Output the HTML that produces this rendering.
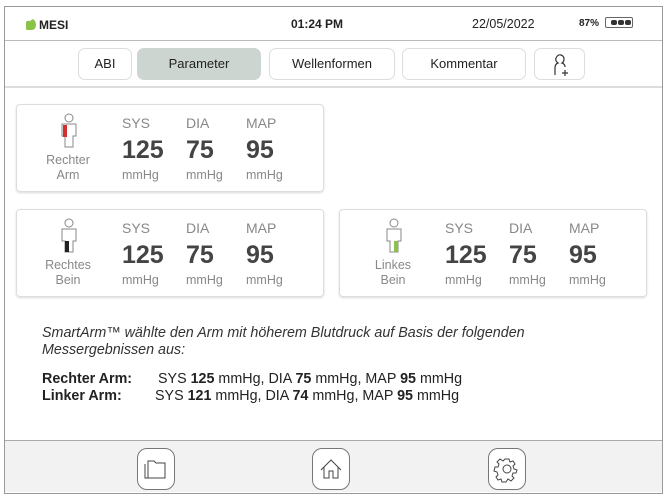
<!DOCTYPE html>
<html><head><meta charset="utf-8"><style>
*{box-sizing:border-box;margin:0;padding:0}
body{width:666px;height:497px;background:#fff;font-family:"Liberation Sans",sans-serif;position:relative;overflow:hidden;color:#333}
.frame{position:absolute;left:4px;top:6px;width:659px;height:488px;border:1px solid #999;}
.abs{position:absolute}
.hdr{position:absolute;left:0;top:0;width:657px;height:34px;border-bottom:1px solid #bbb;font-size:12px;font-weight:bold;color:#222}
.tabs{position:absolute;left:0;top:34px;width:657px;height:47px;border-bottom:2px solid #ddd}
.tab{position:absolute;top:7px;height:32px;border:1px solid #ddd;border-radius:7px;font-size:13px;text-align:center;line-height:30px;color:#222;background:#fff}
.card{position:absolute;width:308px;height:88px;border:1px solid #ddd;border-radius:4px;box-shadow:0 1px 2px rgba(0,0,0,.15)}
.lbl{position:absolute;color:#888;font-size:12.5px;text-align:center;line-height:15px}
.col{position:absolute;top:10px;color:#888;font-size:14px}
.col b{display:block;font-size:25px;color:#444;margin:7px 0 4px;line-height:24px}
.col i{font-style:normal;font-size:12.5px}
.foot{position:absolute;left:0;top:434px;width:657px;height:52px;background:#f2f2f2;border-top:1px solid #aaa}
.fb{position:absolute;top:7px;width:38px;height:42px;border:1px solid #777;border-radius:10px;background:#fff}
.t{font-size:14.3px;line-height:17px;color:#222}
</style></head><body>
<div class="frame">
 <div class="hdr">
  <svg class="abs" style="left:20px;top:12px" width="12" height="11"><path d="M1 4 Q1 1 5 2 L8 0 Q11 2 11 6 Q11 11 6 11 L2 11 Q1 11 1 9Z" fill="#8bc34a"/></svg>
  <span class="abs" style="left:34px;top:11px">MESI</span>
  <span class="abs" style="left:286px;top:10px">01:24 PM</span>
  <span class="abs" style="left:467px;top:10px;font-weight:normal;font-size:12.5px">22/05/2022</span>
  <span class="abs" style="left:574px;top:11px;font-size:10px">87%</span>
  <div class="abs" style="left:600px;top:10px;width:28px;height:11px;border:1px solid #666;border-radius:2px;background:#fff"></div>
  <div class="abs" style="left:606px;top:13px;width:6px;height:5px;background:#333;border-radius:2px"></div>
  <div class="abs" style="left:613px;top:13px;width:6px;height:5px;background:#333;border-radius:2px"></div>
  <div class="abs" style="left:620px;top:13px;width:6px;height:5px;background:#333;border-radius:2px"></div>
 </div>
 <div class="tabs">
  <div class="tab" style="left:73px;width:54px">ABI</div>
  <div class="tab" style="left:132px;width:124px;background:#ccd5d0;border-color:#ccd5d0">Parameter</div>
  <div class="tab" style="left:264px;width:126px">Wellenformen</div>
  <div class="tab" style="left:397px;width:124px">Kommentar</div>
  <div class="tab" style="left:529px;width:51px"><svg width="24" height="24" style="margin-top:4px"><path d="M7 22 V15 Q7 11 10 10 Q7 8 8 5 Q10 1 13 2 Q16 3 16 6 Q16 9 14 10 Q17 11 17 14" fill="none" stroke="#333" stroke-width="1.2"/><path d="M17 17v6M14 20h6" stroke="#333" stroke-width="1.2"/></svg></div>
 </div>
</div>

<div class="card" style="left:16px;top:104px">
 <svg class="abs" style="left:42px;top:8px" width="20" height="36"><circle cx="10" cy="5" r="4" fill="none" stroke="#888"/><path d="M3 11h14v12h-3v11H6V23H3z" fill="none" stroke="#888"/><rect x="4" y="12" width="4" height="12" fill="#d32f2f"/></svg>
 <div class="lbl" style="left:18px;top:48px;width:66px">Rechter<br>Arm</div>
 <div class="col" style="left:105px">SYS<b>125</b><i>mmHg</i></div>
 <div class="col" style="left:169px">DIA<b>75</b><i>mmHg</i></div>
 <div class="col" style="left:229px">MAP<b>95</b><i>mmHg</i></div>
</div>
<div class="card" style="left:16px;top:209px">
 <svg class="abs" style="left:42px;top:8px" width="20" height="36"><circle cx="10" cy="5" r="4" fill="none" stroke="#888"/><path d="M3 11h14v12h-3v11H6V23H3z" fill="none" stroke="#888"/><rect x="6" y="23" width="4" height="11" fill="#222"/></svg>
 <div class="lbl" style="left:18px;top:48px;width:66px">Rechtes<br>Bein</div>
 <div class="col" style="left:105px">SYS<b>125</b><i>mmHg</i></div>
 <div class="col" style="left:169px">DIA<b>75</b><i>mmHg</i></div>
 <div class="col" style="left:229px">MAP<b>95</b><i>mmHg</i></div>
</div>
<div class="card" style="left:339px;top:209px">
 <svg class="abs" style="left:44px;top:8px" width="20" height="36"><circle cx="10" cy="5" r="4" fill="none" stroke="#888"/><path d="M3 11h14v12h-3v11H6V23H3z" fill="none" stroke="#888"/><rect x="10" y="23" width="4" height="11" fill="#8bc34a"/></svg>
 <div class="lbl" style="left:22px;top:48px;width:62px">Linkes<br>Bein</div>
 <div class="col" style="left:105px">SYS<b>125</b><i>mmHg</i></div>
 <div class="col" style="left:169px">DIA<b>75</b><i>mmHg</i></div>
 <div class="col" style="left:229px">MAP<b>95</b><i>mmHg</i></div>
</div>

<div class="abs t" style="left:42px;top:325px;font-style:italic;color:#333">SmartArm™ wählte den Arm mit höherem Blutdruck auf Basis der folgenden<br>Messergebnissen aus:</div>
<div class="abs t" style="left:42px;top:371px"><b>Rechter Arm:</b></div>
<div class="abs t" style="left:158px;top:371px">SYS <b>125</b> mmHg, DIA <b>75</b> mmHg, MAP <b>95</b> mmHg</div>
<div class="abs t" style="left:42px;top:388px"><b>Linker Arm:</b></div>
<div class="abs t" style="left:155px;top:388px">SYS <b>121</b> mmHg, DIA <b>74</b> mmHg, MAP <b>95</b> mmHg</div>

<div class="foot" style="left:5px;top:440px">
 <div class="fb" style="left:132px"><svg width="36" height="40"><path d="M7 15v14h18" fill="none" stroke="#444"/><path d="M10 12h6l2 2h9v15H10z" fill="none" stroke="#444"/></svg></div>
 <div class="fb" style="left:307px"><svg width="36" height="40"><path d="M8 21L18 11l10 10M11 18v11h5v-7h4v7h5V18" fill="none" stroke="#444"/></svg></div>
 <div class="fb" style="left:483px"><svg width="36" height="40"><circle cx="18" cy="20" r="4" fill="none" stroke="#444"/><path d="M16 10h4l1 3 3-1 2 3-2 2 1 3 3 1v0l-1 3-3 0-1 3 2 2-3 3-3-2-2 3h-4l-1-3-3 1-2-3 2-2-1-3-3-1 1-4 3 0 1-3-2-2 3-3 3 2z" fill="none" stroke="#444"/></svg></div>
</div>
</body></html>
